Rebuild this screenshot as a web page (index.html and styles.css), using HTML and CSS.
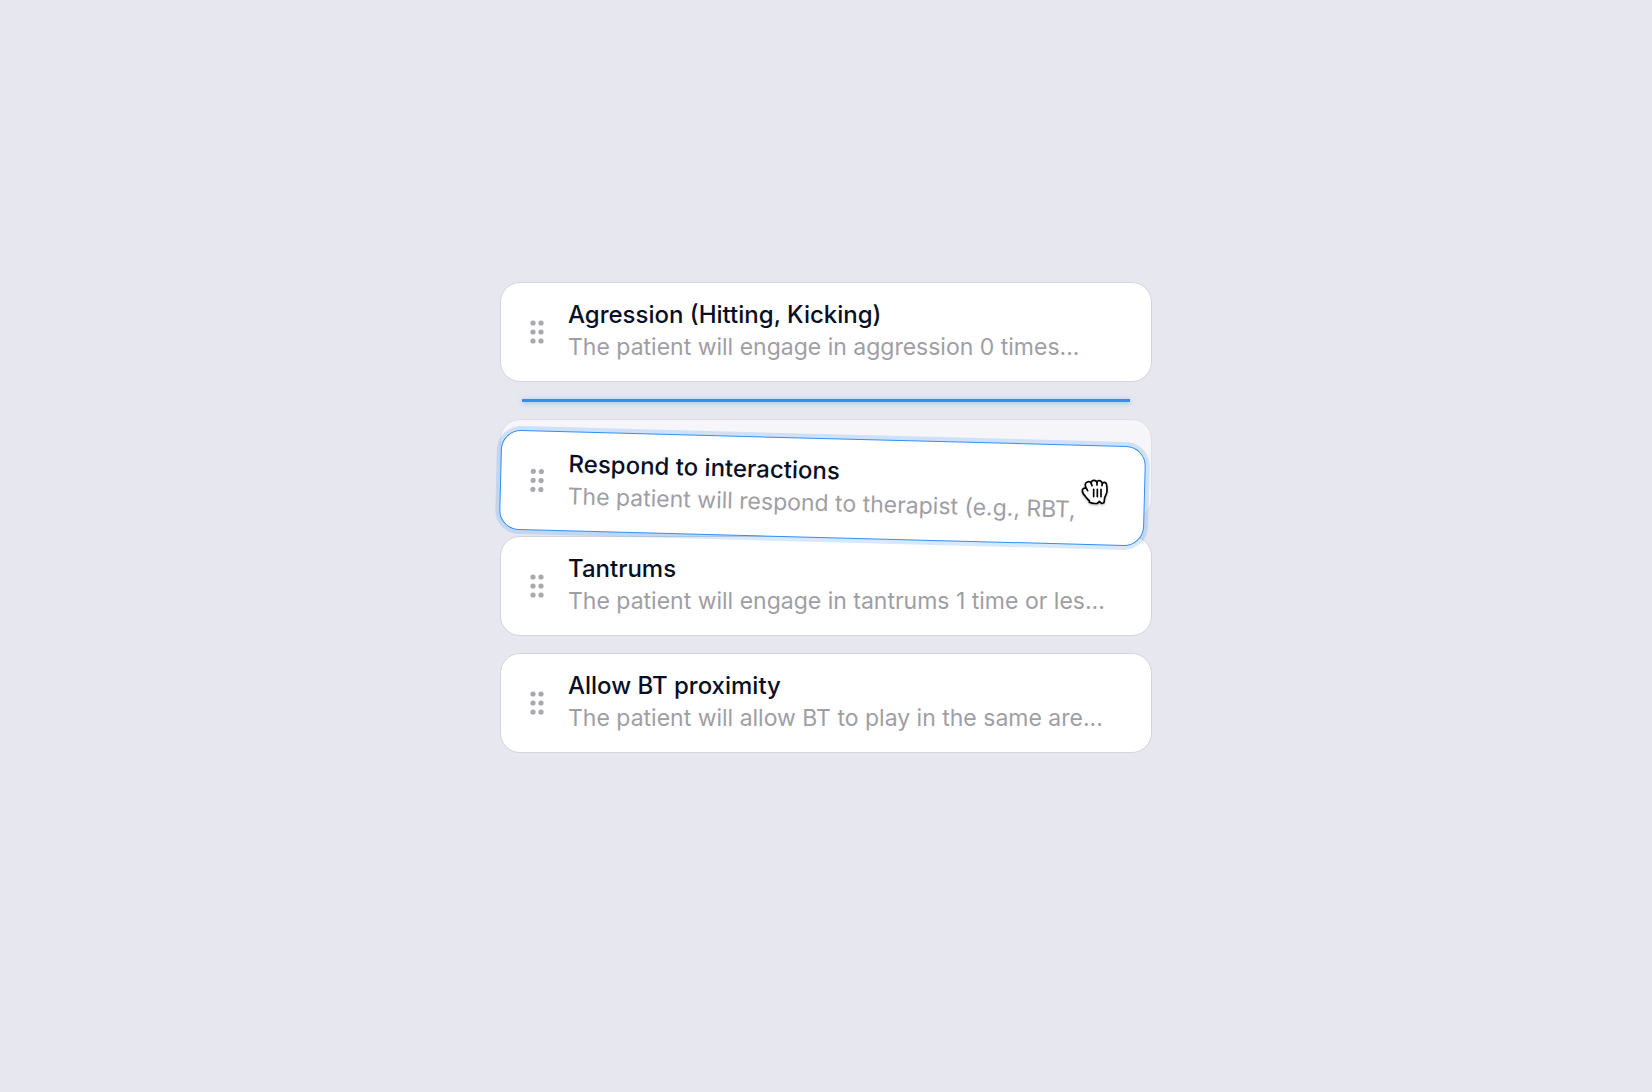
FILE: index.html
```html
<!DOCTYPE html>
<html lang="en">
<head>
    <meta charset="UTF-8">
    <meta name="viewport" content="width=device-width, initial-scale=1.0">
    <title>Goals</title>
    <link rel="stylesheet" href="styles.css">
</head>
<body>

    <!-- Shared drag handle icon -->
    <svg class="sprite" aria-hidden="true">
        <symbol id="grip" viewBox="0 0 14 24">
            <circle cx="3" cy="3" r="2.6"/>
            <circle cx="11" cy="3" r="2.6"/>
            <circle cx="3" cy="12" r="2.6"/>
            <circle cx="11" cy="12" r="2.6"/>
            <circle cx="3" cy="21" r="2.6"/>
            <circle cx="11" cy="21" r="2.6"/>
        </symbol>
    </svg>

    <main class="page">
        <ul class="goal-list">
            <li class="card">
                <button class="grip" type="button" aria-label="Move Agression"><svg><use href="#grip"/></svg></button>
                <div class="card-text">
                    <h2>Agression (Hitting, Kicking)</h2>
                    <p>The patient will engage in aggression 0 times...</p>
                </div>
            </li>

            <li class="drop-line" aria-hidden="true"></li>

            <!-- Original slot, with the picked up card over it -->
            <li class="slot">
                <div class="card dragging">
                    <button class="grip" type="button" aria-label="Move Respond to interactions"><svg><use href="#grip"/></svg></button>
                    <div class="card-text">
                        <h2>Respond to interactions</h2>
                        <p>The patient will respond to therapist (e.g., RBT,</p>
                    </div>
                </div>
                <svg class="cursor" viewBox="780 205 87 84" aria-hidden="true">
                    <path d="M808 278 L808 273 Q802 268 797 261 C792 256 787 250 787 243 C787 237 792 234 799 236 C794 228 795 219 802 217 C807 215 812 218 814 222 C813 215 817 212 822 212 C827 212 830 215 831 219 C831 214 835 212 839 213 C844 214 846 217 847 222 C850 217 855 217 858 221 C861 225 861 235 861 244 C861 252 856 258 854 264 L852 279 Q846 283 842 279 L838 275 L832 281 Q820 283 808 278 Z"/>
                    <path d="M799 236 L803 243 M814 222 L816 228 M831 219 L831 226 M847 222 L846 228 M821 239 V261 M832 239 V261 M843 239 V261"/>
                </svg>
            </li>

            <li class="card">
                <button class="grip" type="button" aria-label="Move Tantrums"><svg><use href="#grip"/></svg></button>
                <div class="card-text">
                    <h2>Tantrums</h2>
                    <p>The patient will engage in tantrums 1 time or les...</p>
                </div>
            </li>

            <li class="card">
                <button class="grip" type="button" aria-label="Move Allow BT proximity"><svg><use href="#grip"/></svg></button>
                <div class="card-text">
                    <h2>Allow BT proximity</h2>
                    <p>The patient will allow BT to play in the same are...</p>
                </div>
            </li>
        </ul>
    </main>

</body>
</html>
```
FILE: styles.css
```css
* {
    box-sizing: border-box;
}
body {
    margin: 0;
    font-family: Inter, "Liberation Sans", sans-serif;
    background-color: #e7e7f0;
    color: #070f26;
}
.sprite {
    position: absolute;
    width: 0;
    height: 0;
}
.page {
    min-height: 100vh;
    display: flex;
    justify-content: center;
    align-items: center;
    padding: 0 16px 58px;
}
.goal-list {
    list-style: none;
    margin: 0;
    padding: 0;
    width: 100%;
    max-width: 652px;
    display: flex;
    flex-direction: column;
    gap: 17px;
}
.card {
    display: flex;
    align-items: center;
    gap: 19px;
    padding: 16px 24px 18px;
    background-color: #fff;
    border: 1px solid #d5d3dc;
    border-radius: 20px;
}
.grip {
    display: flex;
    padding: 2px 5px 0;
    border: none;
    background: none;
    cursor: grab;
}
.grip svg {
    width: 14px;
    height: 24px;
    fill: #a9a8ae;
}
.card-text {
    min-width: 0;
    display: flex;
    flex-direction: column;
    gap: 2px;
}
.card h2,
.card p {
    margin: 0;
    line-height: 31px;
    white-space: nowrap;
}
.card h2 {
    font-size: 24px;
    font-weight: 500;
}
.card p {
    font-size: 23px;
    color: #9f9ea5;
}
/* Shows where the card will land */
.drop-line {
    height: 3px;
    margin: 0 22px;
    background-color: #318ff5;
    box-shadow: 0 1px 5px rgba(49, 143, 245, 0.5);
}
.slot {
    position: relative;
    height: 100px;
    background-color: #f5f5fa;
    border: 1px solid #e0dfe7;
    border-radius: 20px;
}
.dragging {
    position: absolute;
    top: 18px;
    left: -1px;
    right: 6px;
    z-index: 1;
    border-color: #318ff5;
    box-shadow: 0 0 0 4px rgba(49, 143, 245, 0.2);
    transform: rotate(1.5deg);
}
.cursor {
    position: absolute;
    top: 58px;
    right: 42px;
    z-index: 2;
    width: 29px;
    height: 28px;
    fill: #fff;
    stroke: #000;
    stroke-width: 5;
    stroke-linejoin: round;
    stroke-linecap: round;
    filter: drop-shadow(0 1px 1px rgba(0, 0, 0, 0.3));
}
```
